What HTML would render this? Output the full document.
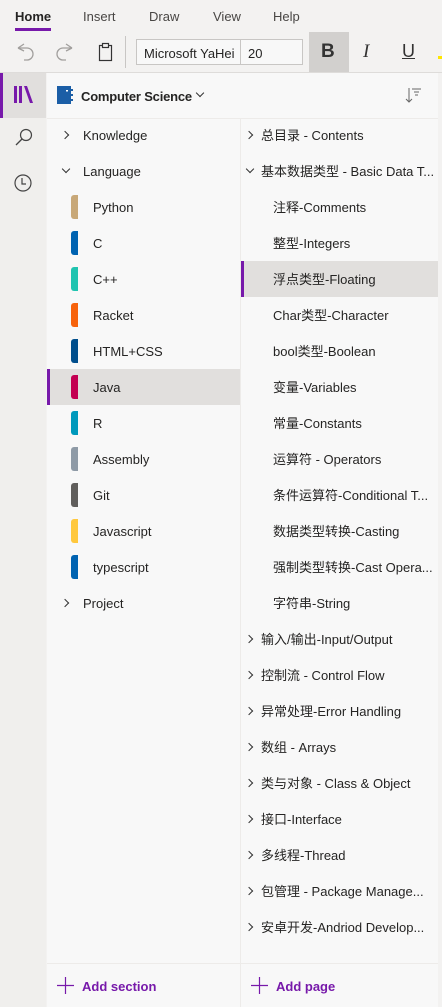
<!DOCTYPE html>
<html><head><meta charset="utf-8"><style>
*{margin:0;padding:0;box-sizing:border-box}
body{width:442px;height:1007px;overflow:hidden;background:#f3f2f1;font-family:"Liberation Sans","Noto Sans CJK SC",sans-serif;font-size:13px;color:#252423;position:relative}
.abs{position:absolute}
.tab{position:absolute;top:9px;font-size:13px;color:#484644}
.row{position:absolute;height:36px;line-height:38px;white-space:nowrap}
.chev{position:absolute;width:6px;height:6px;border-right:1.3px solid #333;border-bottom:1.3px solid #333}
.r{transform:rotate(-45deg)}.d{transform:rotate(45deg)}
.sw{position:absolute;left:24px;top:6px;width:7px;height:24px;border-radius:3px 0 0 3px}
</style></head><body>
<div class="tab" style="left:15px;color:#252423;font-weight:bold">Home</div>
<div class="abs" style="left:15px;top:28px;width:36px;height:3px;background:#7719aa"></div>
<div class="tab" style="left:83px">Insert</div>
<div class="tab" style="left:149px">Draw</div>
<div class="tab" style="left:213px">View</div>
<div class="tab" style="left:273px">Help</div>
<svg class="abs" style="left:14px;top:40px" width="80" height="24" viewBox="0 0 80 24"><path d="M4 8 L10 4 M4 8 L10 11 M4 8 H13 A6 6 0 0 1 13 20 H10" fill="none" stroke="#a19f9d" stroke-width="1.3"/><path d="M58 8 L52 4 M58 8 L52 11 M58 8 H49 A6 6 0 0 0 49 20 H52" fill="none" stroke="#a19f9d" stroke-width="1.3"/></svg>
<svg class="abs" style="left:96px;top:40px" width="20" height="24"><rect x="3.5" y="5.5" width="12" height="15" fill="none" stroke="#333" stroke-width="1.2"/><rect x="6.5" y="3.5" width="6" height="4" fill="#f3f2f1" stroke="#333" stroke-width="1.2"/></svg>
<div class="abs" style="left:125px;top:36px;width:1px;height:32px;background:#c8c6c4"></div>
<div class="abs" style="left:136px;top:39px;width:167px;height:26px;border:1px solid #c8c6c4;background:#f8f8f8"></div>
<div class="abs" style="left:240px;top:39px;width:1px;height:26px;background:#c8c6c4"></div>
<div class="abs" style="left:144px;top:46px;font-size:13px;width:92px;overflow:hidden;white-space:nowrap">Microsoft YaHei</div>
<div class="abs" style="left:248px;top:46px">20</div>
<div class="abs" style="left:309px;top:32px;width:40px;height:40px;background:#d2d0ce"></div>
<div class="abs" style="left:321px;top:41px;font-size:19px;font-weight:bold;color:#333">B</div>
<div class="abs" style="left:363px;top:41px;font-size:19px;font-style:italic;font-family:'Liberation Serif',serif;color:#333">I</div>
<div class="abs" style="left:402px;top:41px;font-size:18px;text-decoration:underline;color:#333">U</div>
<div class="abs" style="left:438px;top:56px;width:4px;height:3px;background:#ffe600"></div>
<div class="abs" style="left:0;top:72px;width:442px;height:1px;background:#dedcda"></div>
<div class="abs" style="left:0;top:73px;width:46px;height:934px;background:#f0efed"></div>
<div class="abs" style="left:0;top:73px;width:46px;height:45px;background:#e1dfdd"></div>
<div class="abs" style="left:0;top:73px;width:3px;height:45px;background:#7719aa"></div>
<svg class="abs" style="left:13px;top:84px" width="22" height="22"><rect x="1" y="2" width="3" height="17" fill="#7719aa"/><rect x="6" y="2" width="3" height="17" fill="#7719aa"/><path d="M11 2 L14 2 L20 19 L17 19Z" fill="#7719aa"/></svg>
<svg class="abs" style="left:13px;top:127px" width="22" height="22"><circle cx="13" cy="8" r="5.5" fill="none" stroke="#444" stroke-width="1.2"/><path d="M9 12 L3 18" stroke="#444" stroke-width="1.3"/></svg>
<svg class="abs" style="left:12px;top:172px" width="22" height="22"><circle cx="11" cy="11" r="8" fill="none" stroke="#444" stroke-width="1.2"/><path d="M10 6 V12 H14" fill="none" stroke="#444" stroke-width="1.2"/></svg>
<div class="abs" style="left:47px;top:73px;width:391px;height:45px;background:#f8f8f8"></div>
<svg class="abs" style="left:57px;top:86px" width="16" height="18"><rect x="0" y="0" width="14" height="18" fill="#1b5ea6"/><rect x="9" y="4" width="2" height="1.5" fill="#fff"/><rect x="14" y="3" width="2" height="2" fill="#1b5ea6"/><rect x="14" y="8" width="2" height="2" fill="#1b5ea6"/><rect x="14" y="13" width="2" height="2" fill="#1b5ea6"/></svg>
<div class="abs" style="left:81px;top:89px;font-weight:bold;font-size:13px;letter-spacing:-0.2px">Computer Science</div>
<div class="chev d" style="left:197px;top:90px;width:6px;height:6px;left:197px"></div>
<svg class="abs" style="left:404px;top:86px" width="18" height="18"><path d="M5 2 V16 M2 13 L5 16 L8 13" fill="none" stroke="#666" stroke-width="1"/><path d="M8 3 H17 M10 6 H15 M11 9 H14" stroke="#666" stroke-width="1"/></svg>
<div class="abs" style="left:47px;top:118px;width:391px;height:1px;background:#edebe9"></div>
<div class="abs" style="left:47px;top:119px;width:193px;height:888px;background:#f8f8f8"></div>
<div class="abs" style="left:240px;top:119px;width:1px;height:888px;background:#edebe9"></div>
<div class="abs" style="left:241px;top:119px;width:197px;height:888px;background:#f8f8f8"></div>
<div class="abs" style="left:438px;top:73px;width:4px;height:934px;background:#f3f2f1"></div>
<div class="abs" style="left:47px;top:369px;width:193px;height:36px;background:#e1dfdd"></div>
<div class="abs" style="left:47px;top:369px;width:3px;height:36px;background:#7719aa"></div>
<div class="abs" style="left:241px;top:261px;width:197px;height:36px;background:#e1dfdd"></div>
<div class="abs" style="left:241px;top:261px;width:3px;height:36px;background:#7719aa"></div>

<div class="row" style="left:47px;top:117px"><div class="chev r" style="left:15px;top:15px"></div><span style="margin-left:36px">Knowledge</span></div>
<div class="row" style="left:47px;top:153px"><div class="chev d" style="left:16px;top:13px"></div><span style="margin-left:36px">Language</span></div>
<div class="row" style="left:47px;top:189px"><div class="sw" style="background:#c8a878"></div><span style="margin-left:46px">Python</span></div>
<div class="row" style="left:47px;top:225px"><div class="sw" style="background:#0063b1"></div><span style="margin-left:46px">C</span></div>
<div class="row" style="left:47px;top:261px"><div class="sw" style="background:#20c4b0"></div><span style="margin-left:46px">C++</span></div>
<div class="row" style="left:47px;top:297px"><div class="sw" style="background:#f7630c"></div><span style="margin-left:46px">Racket</span></div>
<div class="row" style="left:47px;top:333px"><div class="sw" style="background:#004e8c"></div><span style="margin-left:46px">HTML+CSS</span></div>
<div class="row" style="left:47px;top:369px"><div class="sw" style="background:#c30052"></div><span style="margin-left:46px">Java</span></div>
<div class="row" style="left:47px;top:405px"><div class="sw" style="background:#0099bc"></div><span style="margin-left:46px">R</span></div>
<div class="row" style="left:47px;top:441px"><div class="sw" style="background:#8e9aa6"></div><span style="margin-left:46px">Assembly</span></div>
<div class="row" style="left:47px;top:477px"><div class="sw" style="background:#605e5c"></div><span style="margin-left:46px">Git</span></div>
<div class="row" style="left:47px;top:513px"><div class="sw" style="background:#ffc83d"></div><span style="margin-left:46px">Javascript</span></div>
<div class="row" style="left:47px;top:549px"><div class="sw" style="background:#0063b1"></div><span style="margin-left:46px">typescript</span></div>
<div class="row" style="left:47px;top:585px"><div class="chev r" style="left:15px;top:15px"></div><span style="margin-left:36px">Project</span></div>

<div class="row" style="left:241px;top:117px"><div class="chev r" style="left:5px;top:15px"></div><span style="margin-left:20px">总目录 - Contents</span></div>
<div class="row" style="left:241px;top:153px"><div class="chev d" style="left:6px;top:13px"></div><span style="margin-left:20px">基本数据类型 - Basic Data T...</span></div>
<div class="row" style="left:241px;top:189px"><span style="margin-left:32px">注释-Comments</span></div>
<div class="row" style="left:241px;top:225px"><span style="margin-left:32px">整型-Integers</span></div>
<div class="row" style="left:241px;top:261px"><span style="margin-left:32px">浮点类型-Floating</span></div>
<div class="row" style="left:241px;top:297px"><span style="margin-left:32px">Char类型-Character</span></div>
<div class="row" style="left:241px;top:333px"><span style="margin-left:32px">bool类型-Boolean</span></div>
<div class="row" style="left:241px;top:369px"><span style="margin-left:32px">变量-Variables</span></div>
<div class="row" style="left:241px;top:405px"><span style="margin-left:32px">常量-Constants</span></div>
<div class="row" style="left:241px;top:441px"><span style="margin-left:32px">运算符 - Operators</span></div>
<div class="row" style="left:241px;top:477px"><span style="margin-left:32px">条件运算符-Conditional T...</span></div>
<div class="row" style="left:241px;top:513px"><span style="margin-left:32px">数据类型转换-Casting</span></div>
<div class="row" style="left:241px;top:549px"><span style="margin-left:32px">强制类型转换-Cast Opera...</span></div>
<div class="row" style="left:241px;top:585px"><span style="margin-left:32px">字符串-String</span></div>
<div class="row" style="left:241px;top:621px"><div class="chev r" style="left:5px;top:15px"></div><span style="margin-left:20px">输入/输出-Input/Output</span></div>
<div class="row" style="left:241px;top:657px"><div class="chev r" style="left:5px;top:15px"></div><span style="margin-left:20px">控制流 - Control Flow</span></div>
<div class="row" style="left:241px;top:693px"><div class="chev r" style="left:5px;top:15px"></div><span style="margin-left:20px">异常处理-Error Handling</span></div>
<div class="row" style="left:241px;top:729px"><div class="chev r" style="left:5px;top:15px"></div><span style="margin-left:20px">数组 - Arrays</span></div>
<div class="row" style="left:241px;top:765px"><div class="chev r" style="left:5px;top:15px"></div><span style="margin-left:20px">类与对象 - Class &amp; Object</span></div>
<div class="row" style="left:241px;top:801px"><div class="chev r" style="left:5px;top:15px"></div><span style="margin-left:20px">接口-Interface</span></div>
<div class="row" style="left:241px;top:837px"><div class="chev r" style="left:5px;top:15px"></div><span style="margin-left:20px">多线程-Thread</span></div>
<div class="row" style="left:241px;top:873px"><div class="chev r" style="left:5px;top:15px"></div><span style="margin-left:20px">包管理 - Package Manage...</span></div>
<div class="row" style="left:241px;top:909px"><div class="chev r" style="left:5px;top:15px"></div><span style="margin-left:20px">安卓开发-Andriod Develop...</span></div>

<div class="abs" style="left:47px;top:963px;width:391px;height:1px;background:#edebe9"></div>
<svg class="abs" style="left:57px;top:977px" width="18" height="18"><path d="M8.5 0 V17 M0 8.5 H17" stroke="#7719aa" stroke-width="1.2"/></svg>
<div class="abs" style="left:82px;top:979px;color:#7719aa;font-weight:bold">Add section</div>
<svg class="abs" style="left:251px;top:977px" width="18" height="18"><path d="M8.5 0 V17 M0 8.5 H17" stroke="#7719aa" stroke-width="1.2"/></svg>
<div class="abs" style="left:276px;top:979px;color:#7719aa;font-weight:bold">Add page</div>
</body></html>
